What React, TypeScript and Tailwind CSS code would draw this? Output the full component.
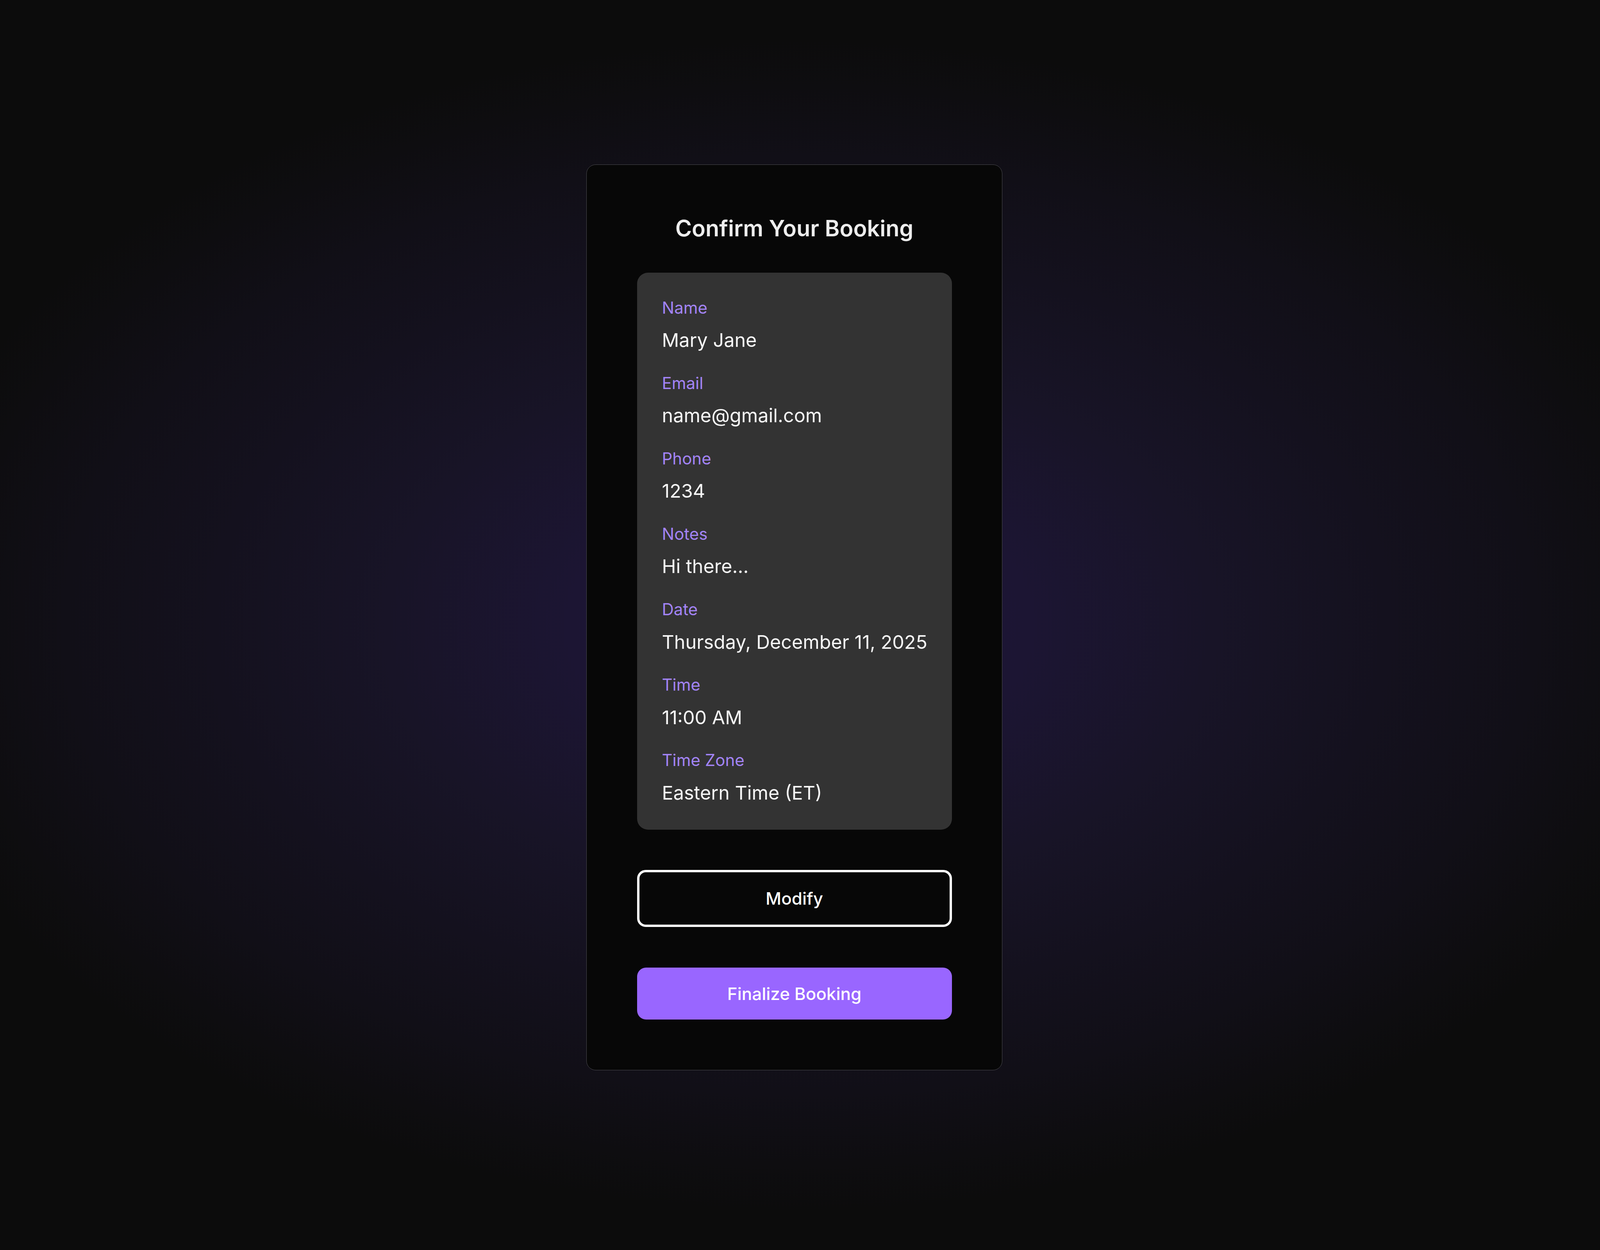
import React from "react";

const rows: { label: string; value: string }[] = [
  { label: "Name", value: "Mary Jane" },
  { label: "Email", value: "name@gmail.com" },
  { label: "Phone", value: "1234" },
  { label: "Notes", value: "Hi there..." },
  { label: "Date", value: "Thursday, December 11, 2025" },
  { label: "Time", value: "11:00 AM" },
  { label: "Time Zone", value: "Eastern Time (ET)" },
];

export default function App() {
  return (
    <div className="min-h-[3200px] w-full flex items-center justify-center pr-[29px] pb-[39px] bg-[#0c0c0c] bg-[radial-gradient(ellipse_2350px_1500px_at_50%_50%,#1f173b_0%,#1c1533_25%,#181427_45%,#14111e_64%,#110f17_80%,#0e0d10_92%,#0c0c0c_100%)] font-['Inter','Noto_Sans',sans-serif]">
      <div className="w-[1065px] box-border rounded-[24px] border-[1.5px] border-[#4a4a4f] bg-[#070707] px-[128.5px] pt-[119px] pb-[128.5px] flex flex-col">
        <h1 className="text-center text-[57.5px] leading-[86px] font-semibold text-[#ededed] mb-[70.5px]">
          Confirm Your Booking
        </h1>
        <div className="rounded-[28px] bg-[#333333] pl-[64px] pr-[40px] pt-[61px] pb-[58.5px] flex flex-col gap-[45.3px]">
          {rows.map((r) => (
            <div key={r.label} className="flex flex-col">
              <div className="text-[42px] leading-[57px] text-[#a384f6] mb-[19.3px]">{r.label}</div>
              <div className="text-[48.5px] leading-[71.5px] text-[#f7f7f7]">{r.value}</div>
            </div>
          ))}
        </div>
        <button className="mt-[103.6px] h-[145.8px] w-full box-border rounded-[22px] border-[6px] border-white bg-[#070707] text-white text-[44px] font-medium">
          Modify
        </button>
        <button className="mt-[104px] h-[133px] w-full rounded-[23px] bg-[#9966ff] text-white text-[44px] font-medium">
          Finalize Booking
        </button>
      </div>
    </div>
  );
}
